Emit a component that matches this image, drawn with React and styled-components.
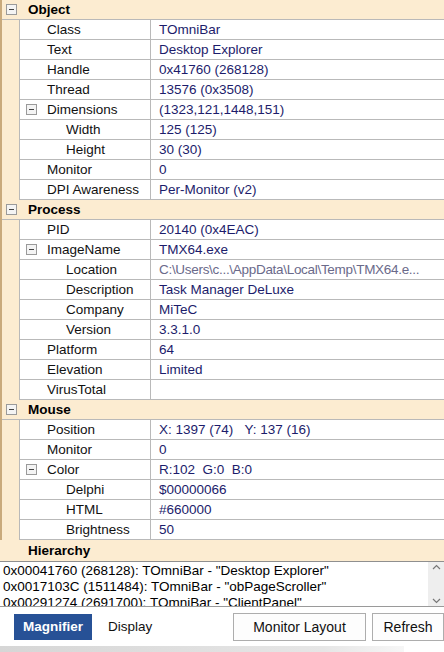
import React from 'react';
import styled, { createGlobalStyle } from 'styled-components';

const GlobalStyle = createGlobalStyle`
  html, body {
    margin: 0;
    padding: 0;
    background: #ffffff;
  }
  body {
    font-family: 'Liberation Sans', Arial, sans-serif;
    font-size: 13.5px;
    color: #000;
  }
`;

const beige = '#fcecd1';
const gridLine = '#b9b9b9';

const sections = [
  {
    title: 'Object',
    rows: [
      { name: 'Class', value: 'TOmniBar' },
      { name: 'Text', value: 'Desktop Explorer' },
      { name: 'Handle', value: '0x41760 (268128)' },
      { name: 'Thread', value: '13576 (0x3508)' },
      { name: 'Dimensions', value: '(1323,121,1448,151)', expand: true },
      { name: 'Width', value: '125 (125)', level: 2 },
      { name: 'Height', value: '30 (30)', level: 2 },
      { name: 'Monitor', value: '0' },
      { name: 'DPI Awareness', value: 'Per-Monitor (v2)' },
    ],
  },
  {
    title: 'Process',
    rows: [
      { name: 'PID', value: '20140 (0x4EAC)' },
      { name: 'ImageName', value: 'TMX64.exe', expand: true },
      { name: 'Location', value: 'C:\\Users\\c...\\AppData\\Local\\Temp\\TMX64.e...', level: 2, blur: true },
      { name: 'Description', value: 'Task Manager DeLuxe', level: 2 },
      { name: 'Company', value: 'MiTeC', level: 2 },
      { name: 'Version', value: '3.3.1.0', level: 2 },
      { name: 'Platform', value: '64' },
      { name: 'Elevation', value: 'Limited' },
      { name: 'VirusTotal', value: '' },
    ],
  },
  {
    title: 'Mouse',
    rows: [
      { name: 'Position', value: 'X: 1397 (74)\u00a0\u00a0\u00a0Y: 137 (16)' },
      { name: 'Monitor', value: '0' },
      { name: 'Color', value: 'R:102\u00a0\u00a0G:0\u00a0\u00a0B:0', expand: true },
      { name: 'Delphi', value: '$00000066', level: 2 },
      { name: 'HTML', value: '#660000', level: 2 },
      { name: 'Brightness', value: '50', level: 2 },
    ],
  },
];

const hierarchy = [
  '0x00041760 (268128): TOmniBar - "Desktop Explorer"',
  '0x0017103C (1511484): TOmniBar - "obPageScroller"',
  '0x00291274 (2691700): TOmniBar - "ClientPanel"',
];

const Window = styled.div`
  width: 444px;
  height: 652px;
  display: flex;
  flex-direction: column;
  overflow: hidden;
  background: #fff;
`;

const Inspector = styled.div`
  display: flex;
  flex-direction: column;
  border-left: 2px solid #c9aa7c;
  background: ${beige};
`;

const CategoryRow = styled.div`
  display: flex;
  align-items: center;
  height: 19px;
  border-bottom: 1px solid ${gridLine};
  background: ${beige};
  padding-left: 4px;
  gap: 11px;
`;

const CategoryTitle = styled.span`
  font-weight: bold;
  font-size: 13.5px;
`;

const BoxIcon = styled.span`
  width: 9px;
  height: 9px;
  border: 1px solid #9a9a9a;
  background: #f4f4f4;
  display: inline-flex;
  align-items: center;
  justify-content: center;
  flex: none;
  &::after {
    content: '';
    width: 5px;
    height: 1px;
    background: #444;
  }
`;

const PropRow = styled.div`
  display: grid;
  grid-template-columns: 18px 131px 1fr;
  height: 20px;
`;

const Gutter = styled.div`
  background: ${beige};
  border-right: 1px solid ${gridLine};
`;

const NameCell = styled.div`
  display: flex;
  align-items: center;
  background: #fff;
  border-bottom: 1px solid ${gridLine};
  border-right: 1px solid ${gridLine};
  padding-left: ${p => (p.$level === 2 ? '46px' : '27px')};
  position: relative;
  white-space: nowrap;
  color: #111;
`;

const RowToggle = styled(BoxIcon)`
  position: absolute;
  left: 6px;
  top: 4px;
`;

const ValueCell = styled.div`
  display: flex;
  align-items: center;
  background: #fff;
  border-bottom: 1px solid ${gridLine};
  padding-left: 8px;
  white-space: nowrap;
  overflow: hidden;
  color: #1c1c6b;
`;

const Blurred = styled.span`
  color: #6a6a8a;
  letter-spacing: -0.3px;
`;

const HierarchyHeader = styled.div`
  display: flex;
  align-items: center;
  height: 21px;
  background: ${beige};
  border-bottom: 1px solid #8f8f8f;
  padding-left: 28px;
  font-weight: bold;
`;

const HierarchyBox = styled.div`
  display: flex;
  height: 44px;
  border-bottom: 1px solid #9a9a9a;
  background: #fff;
  overflow: hidden;
`;

const HierarchyList = styled.div`
  flex: 1;
  padding: 1px 0 0 3px;
  line-height: 16px;
  white-space: nowrap;
  overflow: hidden;
`;

const ScrollBar = styled.div`
  width: 16px;
  background: #eeeeee;
  display: flex;
  flex-direction: column;
  justify-content: space-between;
  align-items: center;
  padding: 2px 0;
  color: #666;
`;

const Toolbar = styled.div`
  display: flex;
  align-items: center;
  height: 39px;
  padding: 0 0 0 14px;
  background: #fff;
`;

const Tab = styled.div`
  display: flex;
  align-items: center;
  height: 26px;
  padding: 0 ${p => (p.$active ? '9px' : '16px')};
  background: ${p => (p.$active ? '#275196' : 'transparent')};
  color: ${p => (p.$active ? '#fff' : '#111')};
  font-weight: ${p => (p.$active ? 'bold' : 'normal')};
`;

const Spacer = styled.div`
  flex: 1;
`;

const Button = styled.div`
  display: flex;
  align-items: center;
  justify-content: center;
  flex: none;
  height: 28px;
  width: ${p => p.$width}px;
  margin-left: 6px;
  border: 1px solid #adadad;
  background: #fdfdfd;
  font-size: 14px;
  color: #111;
  box-sizing: border-box;
`;

const BottomBar = styled.div`
  height: 6px;
  margin-right: 40px;
  background: linear-gradient(to right, #d6d6d6, #e6e6e6 80%, #f6f6f6);
`;

const Chevron = ({ up }) => (
  <svg width="9" height="6" viewBox="0 0 9 6">
    <path
      d={up ? 'M1 5 L4.5 1.5 L8 5' : 'M1 1 L4.5 4.5 L8 1'}
      fill="none"
      stroke="#777"
      strokeWidth="1.2"
    />
  </svg>
);

const Section = ({ title, rows }) => (
  <>
    <CategoryRow>
      <BoxIcon />
      <CategoryTitle>{title}</CategoryTitle>
    </CategoryRow>
    {rows.map((r, i) => (
      <PropRow key={i}>
        <Gutter />
        <NameCell $level={r.level}>
          {r.expand && <RowToggle />}
          {r.name}
        </NameCell>
        <ValueCell>{r.blur ? <Blurred>{r.value}</Blurred> : r.value}</ValueCell>
      </PropRow>
    ))}
  </>
);

export default function App() {
  return (
    <Window>
      <GlobalStyle />
      <Inspector>
        {sections.map(s => (
          <Section key={s.title} {...s} />
        ))}
      </Inspector>
      <HierarchyHeader>Hierarchy</HierarchyHeader>
      <HierarchyBox>
        <HierarchyList>
          {hierarchy.map((h, i) => (
            <div key={i}>{h}</div>
          ))}
        </HierarchyList>
        <ScrollBar>
          <Chevron up />
          <Chevron />
        </ScrollBar>
      </HierarchyBox>
      <Toolbar>
        <Tab $active>Magnifier</Tab>
        <Tab>Display</Tab>
        <Spacer />
        <Button $width={133}>Monitor Layout</Button>
        <Button $width={72}>Refresh</Button>
      </Toolbar>
      <BottomBar />
    </Window>
  );
}
